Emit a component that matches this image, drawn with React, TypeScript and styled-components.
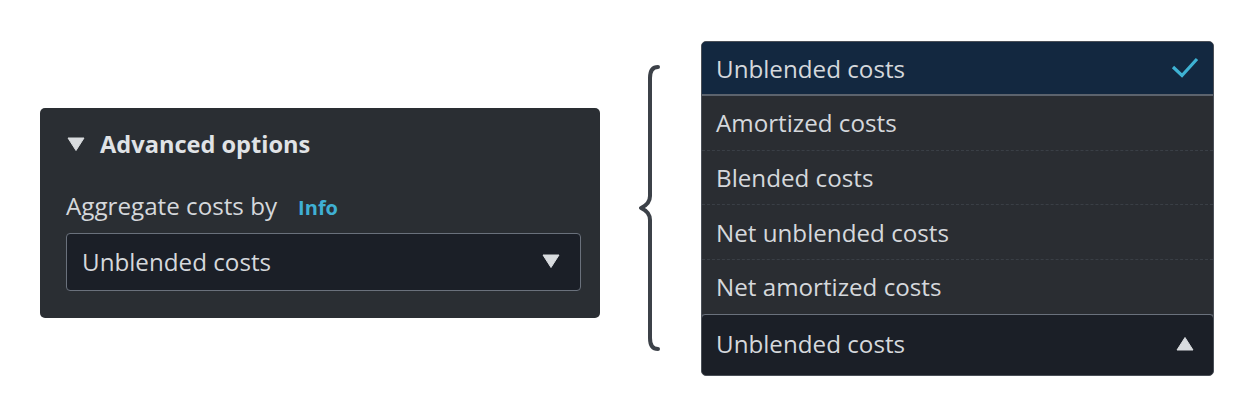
import React from "react";
import styled, { createGlobalStyle } from "styled-components";

const GlobalStyle = createGlobalStyle`
  html, body {
    margin: 0;
    padding: 0;
    background: #ffffff;
  }
  body {
    font-family: "Open Sans", "Noto Sans", "Liberation Sans", sans-serif;
    -webkit-font-smoothing: antialiased;
  }
`;

const Page = styled.div`
  width: 1254px;
  height: 416px;
  display: flex;
  align-items: center;
  padding-left: 40px;
  box-sizing: border-box;
`;

/* ---------- Expandable section with a select ---------- */

const Section = styled.section`
  flex: none;
  width: 560px;
  height: 210px;
  margin-top: 10px;
  box-sizing: border-box;
  background: #2a2e33;
  border-radius: 5px;
  padding: 24px 19px 27px 26px;
  display: flex;
  flex-direction: column;
  color: #d5d8dc;
`;

const SectionHeader = styled.div`
  flex: none;
  display: flex;
  align-items: center;
  gap: 15px;
  height: 24px;
  margin-left: 1px;
  font-size: 23.6px;
  font-weight: 700;
  color: #e0e3e6;
`;

const Caret = styled.svg<{ $up?: boolean }>`
  flex: none;
  width: 18px;
  height: 14px;
  transform: ${(p) => (p.$up ? "rotate(180deg)" : "none")};
`;

const FieldLabel = styled.div`
  flex: none;
  display: flex;
  align-items: baseline;
  gap: 21px;
  height: 32px;
  line-height: 32px;
  margin-top: 34px;
  font-size: 24.2px;
  color: #d5d8dc;
`;

const InfoLink = styled.span`
  font-size: 20px;
  font-weight: 700;
  color: #3fb0d4;
`;

const SelectBox = styled.div`
  flex: none;
  margin-top: 11px;
  height: 58px;
  box-sizing: border-box;
  background: #1b1f27;
  border: 1.5px solid #6a717c;
  border-radius: 4px;
  display: flex;
  align-items: center;
  justify-content: space-between;
  padding: 0 20px 2px 15px;
  font-size: 24.2px;
  color: #d5d8dc;
`;

/* ---------- Brace between the two states ---------- */

const Brace = styled.svg`
  flex: none;
  width: 30px;
  height: 292px;
  margin-left: 34px;
  margin-right: 37px;
`;

/* ---------- Opened dropdown ---------- */

const Dropdown = styled.div`
  flex: none;
  width: 513px;
  height: 335px;
  margin-top: 1px;
  box-sizing: border-box;
  border: 1px solid #4a4f57;
  border-radius: 5px;
  overflow: hidden;
  display: flex;
  flex-direction: column;
  background: #2a2d32;
`;

const Option = styled.div<{ $selected?: boolean }>`
  flex: none;
  height: ${(p) => (p.$selected ? "52px" : "53.7px")};
  box-sizing: content-box;
  display: flex;
  align-items: center;
  justify-content: space-between;
  padding: 0 14px 0 14px;
  font-size: 24.2px;
  color: #d5d8dc;
  background: ${(p) => (p.$selected ? "#132840" : "#2a2d32")};
  border-bottom: ${(p) =>
    p.$selected ? "2px solid #5c636d" : "1px dashed #3a3f46"};
`;

const Trigger = styled.div`
  flex: 1;
  box-sizing: border-box;
  background: #1b1f27;
  border: 1.5px solid #6a717c;
  border-radius: 4px;
  margin: -1px -1px -1px -1px;
  display: flex;
  align-items: center;
  justify-content: space-between;
  padding: 0 19px 2px 14px;
  font-size: 24.2px;
  color: #d5d8dc;
`;

const Check = styled.svg`
  width: 28px;
  height: 22px;
`;

const CaretIcon = ({ up }: { up?: boolean }) => (
  <Caret $up={up} viewBox="0 0 18 14">
    <path d="M1 1 H17 L9 13.5 Z" fill="#d9dcdf" strokeLinejoin="round" stroke="#d9dcdf" strokeWidth="1" />
  </Caret>
);

const options = [
  "Amortized costs",
  "Blended costs",
  "Net unblended costs",
  "Net amortized costs",
];

export default function App() {
  return (
    <>
      <GlobalStyle />
      <Page>
        <Section>
          <SectionHeader>
            <CaretIcon />
            <span>Advanced options</span>
          </SectionHeader>
          <FieldLabel>
            <span>Aggregate costs by</span>
            <InfoLink>Info</InfoLink>
          </FieldLabel>
          <SelectBox>
            <span>Unblended costs</span>
            <CaretIcon />
          </SelectBox>
        </Section>

        <Brace viewBox="0 0 30 292">
          <path
            d="M24 5 Q16 5 16 16 L16 134 Q16 142 7 146 Q16 150 16 158 L16 276 Q16 287 24 287"
            fill="none"
            stroke="#3c4148"
            strokeWidth="4"
            strokeLinecap="round"
            strokeLinejoin="round"
          />
        </Brace>

        <Dropdown>
          <Option $selected>
            <span>Unblended costs</span>
            <Check viewBox="0 0 28 22">
              <path
                d="M2 10 L11 18.5 L26 2"
                fill="none"
                stroke="#3eb2d3"
                strokeWidth="3.2"
              />
            </Check>
          </Option>
          {options.map((o) => (
            <Option key={o}>
              <span>{o}</span>
            </Option>
          ))}
          <Trigger>
            <span>Unblended costs</span>
            <CaretIcon up />
          </Trigger>
        </Dropdown>
      </Page>
    </>
  );
}
